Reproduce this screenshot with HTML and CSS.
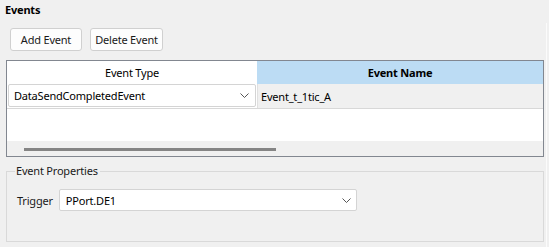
FILE: index.html
```html
<!DOCTYPE html>
<html>
<head>
<meta charset="utf-8">
<link rel="stylesheet" href="styles.css">
</head>
<body>
<div class="page">
  <div class="main">
    <div class="title">Events</div>
    <div class="toolbar">
      <button class="btn btn-add">Add Event</button>
      <button class="btn btn-del">Delete Event</button>
    </div>
    <div class="grid">
      <div class="head">
        <div class="hcell htype">Event Type</div>
        <div class="hcell hname">Event Name</div>
      </div>
      <div class="row">
        <div class="cell ctype">
          <div class="combo combo-table">
            <span>DataSendCompletedEvent</span>
            <svg class="chev" width="9" height="5" viewBox="0 0 9 5"><path d="M0.5 0.5 L4.5 4.5 L8.5 0.5" fill="none" stroke="#555" stroke-width="1"/></svg>
          </div>
        </div>
        <div class="cell cname">Event_t_1tic_A</div>
      </div>
      <div class="empty"></div>
      <div class="hscroll"><div class="thumb"></div></div>
    </div>
    <fieldset class="group">
      <legend>Event Properties</legend>
      <div class="field">
        <label class="flabel">Trigger</label>
        <div class="combo combo-trigger">
          <span>PPort.DE1</span>
          <svg class="chev" width="9" height="5" viewBox="0 0 9 5"><path d="M0.5 0.5 L4.5 4.5 L8.5 0.5" fill="none" stroke="#555" stroke-width="1"/></svg>
        </div>
      </div>
    </fieldset>
  </div>
  <div class="edge"></div>
</div>
</body>
</html>
```

FILE: styles.css
```css
html, body {
  margin: 0;
  padding: 0;
  background: #f0f0f0;
}
body {
  width: 549px;
  height: 247px;
  overflow: hidden;
  font-family: "Noto Sans", "DejaVu Sans", sans-serif;
  font-size: 11px;
  letter-spacing: -0.2px;
  color: #000;
}
.page {
  display: flex;
  height: 247px;
}
.main {
  width: 546px;
  flex: none;
}
.edge {
  width: 1px;
  margin-top: 23px;
  background: #fbfbfb;
  flex: none;
}
.title {
  font-weight: bold;
  padding-left: 5px;
  height: 20px;
  line-height: 20px;
}
.toolbar {
  display: flex;
  gap: 8px;
  margin-left: 10px;
  margin-top: 8px;
  height: 23px;
}
.btn {
  font-family: inherit;
  font-size: 11px;
  letter-spacing: -0.2px;
  background: #fdfdfd;
  border: 1px solid #d0d0d0;
  border-radius: 3px;
  height: 23px;
  padding: 0;
  color: #1a1a1a;
}
.btn-add { width: 72px; }
.btn-del { width: 73px; }
.grid {
  margin-top: 9px;
  margin-left: 6px;
  width: 536px;
  height: 95px;
  border: 1px solid #828790;
  background: #fff;
  display: flex;
  flex-direction: column;
}
.head {
  display: flex;
  height: 23px;
  flex: none;
}
.hcell {
  display: flex;
  align-items: center;
  justify-content: center;
}
.htype {
  width: 250px;
  background: #fff;
}
.hname {
  flex: 1;
  background: #bcdcf4;
  font-weight: bold;
}
.row {
  display: flex;
  height: 24px;
  flex: none;
  border-bottom: 1px solid #d8d8d8;
  background: #f0f0f0;
}
.ctype {
  width: 250px;
  background: #fff;
  padding: 0 1px;
  box-sizing: border-box;
}
.cname {
  flex: 1;
  display: flex;
  align-items: center;
  padding-left: 3px;
  border-left: 1px solid #e0e0e0;
}
.combo {
  display: flex;
  align-items: center;
  justify-content: space-between;
  background: #fff;
  border: 1px solid #d4d4d4;
  border-radius: 2px;
  box-sizing: border-box;
}
.combo-table {
  height: 23px;
  padding: 0 6px 0 5px;
}
.empty {
  height: 32px;
  flex: none;
  background: #fff;
}
.hscroll {
  flex: 1;
  background: #f0f0f0;
  padding-top: 7px;
  box-sizing: border-box;
}
.thumb {
  margin-left: 17px;
  width: 252px;
  height: 3px;
  background: #858585;
}
.group {
  margin: 7px 0 0 6px;
  width: 538px;
  height: 78px;
  box-sizing: border-box;
  border: 1px solid #d9d9d9;
  padding: 0 0 0 10px;
}
.group legend {
  padding: 0 2px 0 1px;
  margin-left: -2px;
  color: #1a1a1a;
  line-height: 14px;
}
.field {
  display: flex;
  align-items: center;
  gap: 6px;
  margin-top: 11px;
}
.flabel {
  color: #1a1a1a;
}
.combo-trigger {
  width: 298px;
  height: 22px;
  padding: 0 5px 0 6px;
}
```
